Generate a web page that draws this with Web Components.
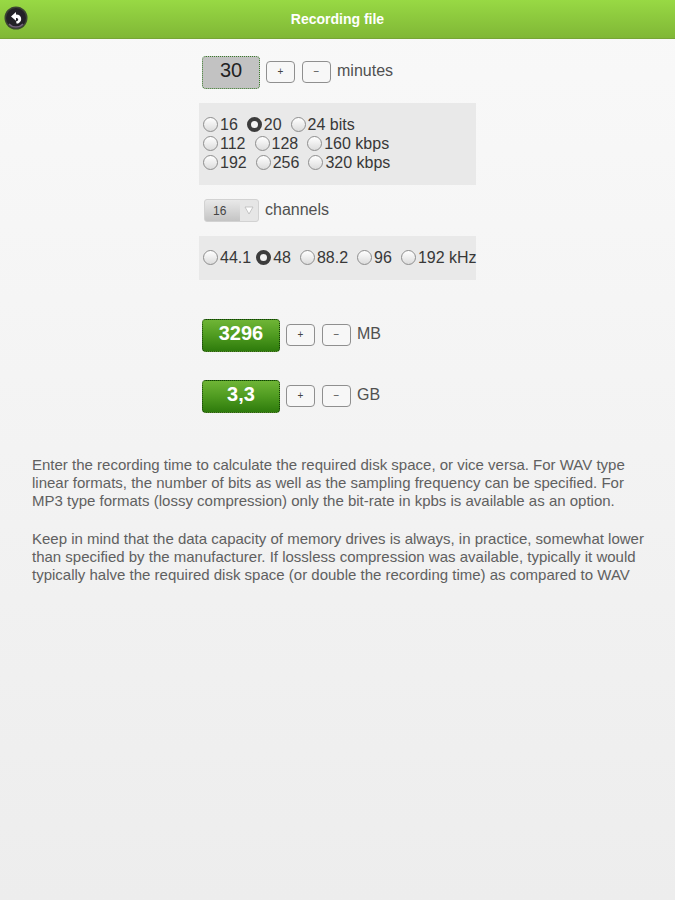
<!DOCTYPE html>
<html lang="en">
<head>
<meta charset="utf-8">
<meta name="viewport" content="width=device-width, initial-scale=1">
<title>Recording file</title>
<style>
  html {
    min-height: 100%;
    background: linear-gradient(#f9f9f9, #ededed);
  }
  body {
    margin: 0;
    font-family: "Liberation Sans", Arial, Helvetica, sans-serif;
    font-size: 16px;
    color: #505050;
  }
</style>
</head>
<body>

<recording-calculator></recording-calculator>

<script>
class TitleBar extends HTMLElement {

  constructor() {
    super();

    const shadowRoot = this.attachShadow({mode: 'open'});

    shadowRoot.innerHTML = `
      <style>
        :host {
          display: grid;
          grid-template-columns: 1fr auto 1fr;
          align-items: center;
          height: 39px;
          box-sizing: border-box;
          padding: 0 4px 2px;
          background: linear-gradient(#98d944, #80b736);
          border-bottom: 1px solid #76a536;
        }
        button {
          justify-self: start;
          width: 24px;
          height: 24px;
          padding: 0;
          border: 0;
          background: none;
          cursor: pointer;
        }
        svg {
          display: block;
        }
        h1 {
          margin: 0;
          padding-top: 2px;
          font-size: 14px;
          line-height: 16px;
          color: #fff;
        }
      </style>
      <button type="button" aria-label="Back">
        <svg width="24" height="24" viewBox="0 0 24 24">
          <circle cx="12" cy="12" r="11.5" fill="#3b4432"/>
          <circle cx="12" cy="12" r="10" fill="#232127"/>
          <path d="M5 18a9.5 9.5 0 0 0 14 0" fill="none" stroke="#72617c" stroke-width="1.5"/>
          <path d="M7 10.500l5-4.500v2.500c3.500 0 5.200 1.900 5.200 4.500 0 2.500-1.700 4.200-4.400 4.800l-.9-2.200c1.500-.4 2.300-1.100 2.300-2.200 0-1-.7-1.500-2.200-1.500v2.900z" fill="#fff"/>
        </svg>
      </button>
      <h1><slot></slot></h1>
    `;
  }
}

class ValueRow extends HTMLElement {

  constructor() {
    super();

    const shadowRoot = this.attachShadow({mode: 'open'});

    shadowRoot.innerHTML = `
      <style>
        :host {
          display: flex;
          align-items: center;
          padding-left: 3px;
          height: 33px;
        }
        input {
          box-sizing: border-box;
          width: 58px;
          height: 33px;
          margin: 0 6px 0 0;
          padding: 0 0 4px;
          border: 1px dotted #3c7c2c;
          border-radius: 4px;
          background: #c2c2c2;
          font: 20px "Liberation Sans", Arial, sans-serif;
          color: #222;
          text-align: center;
        }
        :host([result]) input {
          width: 78px;
          border-color: #143c08;
          background: linear-gradient(#6fb536, #4f9b20 50%, #2e7b0c);
          font-weight: bold;
          color: #fff;
        }
        button {
          box-sizing: border-box;
          width: 29px;
          height: 22px;
          margin: 0 7px 1px 0;
          padding: 0;
          border: 1px solid #8f8f8f;
          border-radius: 4px;
          background: #f7f7f7;
          font: 10px/18px "Liberation Sans", Arial, sans-serif;
          color: #444;
          cursor: pointer;
        }
        #less {
          margin-right: 6px;
        }
        label {
          padding-bottom: 3px;
        }
      </style>
      <input id="value" type="text" inputmode="decimal">
      <button type="button" id="more" aria-label="Increase">+</button>
      <button type="button" id="less" aria-label="Decrease">−</button>
      <label for="value"><slot></slot></label>
    `;

    this.input = shadowRoot.querySelector('#value');
    shadowRoot.querySelector('#more').addEventListener('click', () => this.step(1));
    shadowRoot.querySelector('#less').addEventListener('click', () => this.step(-1));
    this.input.addEventListener('change', () => this.notify());
  }

  connectedCallback() {
    this.input.value = this.getAttribute('value');
  }

  get value() {
    return parseFloat(this.input.value.replace(',', '.')) || 0;
  }

  set value(value) {
    this.input.value = String(value).replace('.', ',');
  }

  step(amount) {
    this.value = Math.max(0, Math.round((this.value + amount) * 10) / 10);
    this.notify();
  }

  notify() {
    this.dispatchEvent(new CustomEvent('edit', {bubbles: true}));
  }
}

// rows: lines split by "|", options by ";", a trailing "*" marks the checked one
class RadioPanel extends HTMLElement {

  constructor() {
    super();

    const shadowRoot = this.attachShadow({mode: 'open'});

    shadowRoot.innerHTML = `
      <style>
        :host {
          display: block;
          padding: 12px 0 13px 4px;
          background: #e9e9e9;
          line-height: 19px;
          color: #383838;
        }
        .row {
          display: flex;
          gap: 9px;
          white-space: nowrap;
        }
        label {
          display: flex;
          align-items: center;
          gap: 2px;
        }
        .tight {
          margin-right: -4px;
        }
        input {
          appearance: none;
          box-sizing: border-box;
          width: 15px;
          height: 15px;
          margin: 0;
          border: 1px solid #8e8e8e;
          border-radius: 50%;
          background: linear-gradient(#fff, #dcdcdc);
        }
        input:checked {
          border: 4px solid #3c3c3c;
          background: #f2f2f2;
        }
      </style>
      <div id="rows" role="radiogroup"></div>
    `;
  }

  connectedCallback() {
    const rows = this.shadowRoot.querySelector('#rows');
    rows.setAttribute('aria-label', this.getAttribute('label'));

    rows.innerHTML = this.getAttribute('rows').split('|').map(row => `
      <div class="row">${row.split(';').map(option => {
        const text = option.replace('*', '');
        return `<label class="${text === '44.1' ? 'tight' : ''}"><input type="radio" name="option"
          value="${parseFloat(text)}" ${option.endsWith('*') ? 'checked' : ''}>${text}</label>`;
      }).join('')}</div>`).join('');
  }

  get value() {
    return Number(this.shadowRoot.querySelector('input:checked').value);
  }
}

class ChannelSelect extends HTMLElement {

  constructor() {
    super();

    const shadowRoot = this.attachShadow({mode: 'open'});

    shadowRoot.innerHTML = `
      <style>
        :host {
          display: flex;
          align-items: center;
          gap: 6px;
          padding-left: 5px;
        }
        .box {
          position: relative;
        }
        select {
          display: block;
          appearance: none;
          box-sizing: border-box;
          width: 55px;
          height: 23px;
          padding: 0 0 0 8px;
          border: 1px solid #d2d2d2;
          border-radius: 3px;
          background: linear-gradient(#e9e9e9, #c4c4c4) left / 35px 100% no-repeat, #e6e6e6;
          font: 12px "Liberation Sans", Arial, sans-serif;
          color: #444;
        }
        svg {
          position: absolute;
          right: 5px;
          top: 7px;
          pointer-events: none;
        }
        label {
          padding-bottom: 2px;
        }
      </style>
      <div class="box">
        <select id="channels">
          <option>1</option><option>2</option><option>4</option><option>8</option>
          <option selected>16</option><option>24</option><option>32</option>
        </select>
        <svg width="10" height="9" viewBox="0 0 10 9">
          <path d="M1 1h8L5 8z" fill="#fff" stroke="#b9b9b9" stroke-width=".8"/>
        </svg>
      </div>
      <label for="channels"><slot></slot></label>
    `;
  }

  get value() {
    return Number(this.shadowRoot.querySelector('select').value);
  }
}

class RecordingCalculator extends HTMLElement {

  constructor() {
    super();

    const shadowRoot = this.attachShadow({mode: 'open'});

    shadowRoot.innerHTML = `
      <style>
        :host {
          display: block;
        }
        form {
          display: flex;
          flex-direction: column;
          gap: 14px;
          max-width: 277px;
          margin: 17px auto 0;
        }
        #mb {
          margin-top: 25px;
        }
        #gb {
          margin-top: 14px;
        }
        .help {
          margin: 43px 24px 0 32px;
          font-size: 15px;
          line-height: 18px;
          color: #606060;
        }
        p {
          margin: 0 0 20px;
        }
      </style>
      <title-bar>Recording file</title-bar>
      <form>
        <value-row id="minutes" value="30">minutes</value-row>
        <radio-panel id="format" label="Format" rows="16;20*;24 bits|112;128;160 kbps|192;256;320 kbps"></radio-panel>
        <channel-select id="channels">channels</channel-select>
        <radio-panel id="rate" label="Sampling frequency" rows="44.1;48*;88.2;96;192 kHz"></radio-panel>
        <value-row id="mb" result value="3296">MB</value-row>
        <value-row id="gb" result value="3,3">GB</value-row>
      </form>
      <div class="help">
        <p>Enter the recording time to calculate the required disk space, or vice versa. For WAV type linear formats, the number of bits as well as the sampling frequency can be specified. For MP3 type formats (lossy compression) only the bit-rate in kpbs is available as an option.</p>
        <p>Keep in mind that the data capacity of memory drives is always, in practice, somewhat lower than specified by the manufacturer. If lossless compression was available, typically it would typically halve the required disk space (or double the recording time) as compared to WAV</p>
      </div>
    `;

    this.find = id => shadowRoot.querySelector('#' + id);
    shadowRoot.addEventListener('edit', event => this.update(event.target.id));
    this.find('format').shadowRoot.addEventListener('change', () => this.update('minutes'));
    this.find('rate').shadowRoot.addEventListener('change', () => this.update('minutes'));
    this.find('channels').shadowRoot.addEventListener('change', () => this.update('minutes'));
  }

  // megabytes taken by one minute of recording
  get perMinute() {
    const format = this.find('format').value;
    if (format > 24) {
      return format * 60 / 8 / 1024;
    }
    return format * this.find('rate').value * 1000 * this.find('channels').value * 60 / 8 / 1048576;
  }

  update(source) {
    const minutes = this.find('minutes');
    const mb = this.find('mb');
    const gb = this.find('gb');

    if (source === 'gb') {
      mb.value = Math.round(gb.value * 1000);
    }
    if (source === 'minutes') {
      mb.value = Math.round(minutes.value * this.perMinute);
    } else {
      minutes.value = Math.round(mb.value / this.perMinute);
    }
    if (source !== 'gb') {
      gb.value = Math.round(mb.value / 100) / 10;
    }
  }
}

customElements.define('title-bar', TitleBar);
customElements.define('value-row', ValueRow);
customElements.define('radio-panel', RadioPanel);
customElements.define('channel-select', ChannelSelect);
customElements.define('recording-calculator', RecordingCalculator);
</script>
</body>
</html>
